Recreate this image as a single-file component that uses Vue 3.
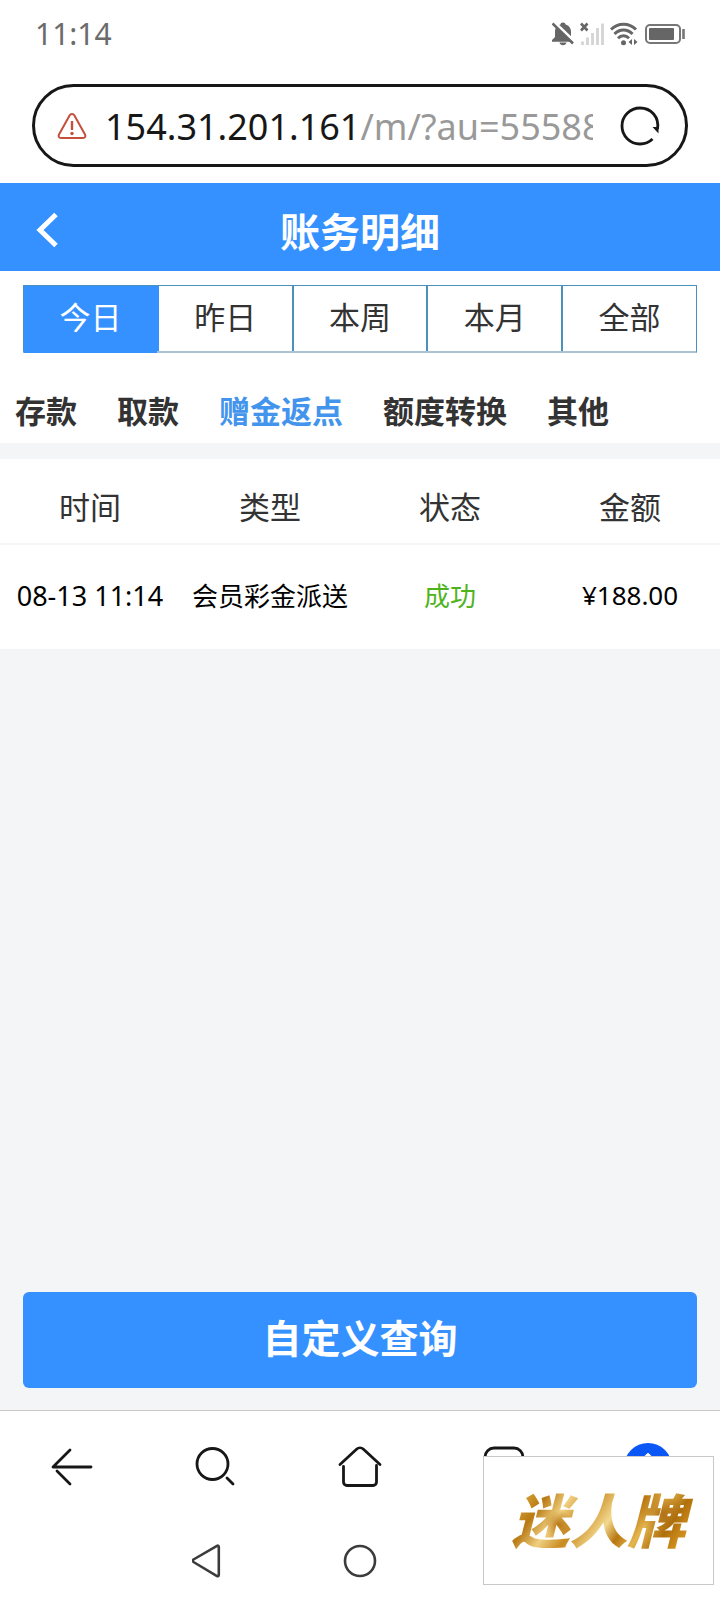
<template>
  <div class="screen">
    <div class="browser">
      <div class="status">
        <span class="clock">11:14</span>
        <div class="status-icons">
          <svg width="22" height="24" viewBox="0 0 22 24">
            <path d="M11 0.500c-1.600 0-2.400.8-2.600 2C5 3.500 3 6.500 3 9.500V15l-3 3v1.800h21V18l-2-3V9.500c0-3-2-6-5.400-7C13.400 1.300 12.600.5 11 .5z" fill="#666" />
            <path d="M7.500 20.500h7c-.6 3.500-6.400 3.500-7 0z" fill="#666" />
            <path d="M2 0l21 20" stroke="#fff" stroke-width="3" />
            <path d="M.5 1.500L21 21.500" stroke="#666" stroke-width="2.600" />
          </svg>
          <svg width="24" height="24" viewBox="0 0 24 24">
            <path d="M1 1.500l6.500 7M7.500 1.500L1 8.500" stroke="#666" stroke-width="2.600" />
            <path d="M2.500 19.500V23M7.500 15.500V23M12.500 11V23M17.500 6V23M22.500 1.500V23" stroke="#d4d4d4" stroke-width="2.800" />
          </svg>
          <svg width="28" height="24" viewBox="0 0 28 24">
            <g fill="none" stroke="#666" stroke-width="3">
              <path d="M1 7.500C8 .5 19 .5 26 7.500" />
              <path d="M4.500 12c5-5.300 13-5.300 18 0" />
              <path d="M8 16.200c3.200-3.400 7.800-3.400 11 0" />
            </g>
            <circle cx="13.500" cy="20.800" r="2.500" fill="#666" />
            <path d="M22 17v6l-3.500-3zM24 17v6l3.500-3z" fill="#666" />
          </svg>
          <svg width="42" height="24" viewBox="0 0 42 24">
            <rect x="2" y="3" width="34" height="18" rx="4" fill="none" stroke="#777" stroke-width="2" />
            <rect x="5" y="6" width="25" height="12" rx="1" fill="#666" />
            <path d="M39.500 7v10" stroke="#777" stroke-width="2.600" />
          </svg>
        </div>
      </div>

      <div class="address">
        <svg width="30" height="28" viewBox="0 0 30 28">
          <path d="M12.700 3.200L2 22.500C1 24.500 2 26 4 26h22c2 0 3-1.500 2-3.500L17.300 3.200c-1-1.700-3.600-1.700-4.600 0z" fill="none" stroke="#c4503c" stroke-width="2" />
          <path d="M15 9v9" stroke="#c4503c" stroke-width="2.400" />
          <circle cx="15" cy="21.500" r="1.700" fill="#c4503c" />
        </svg>
        <button class="url" type="button">154.31.201.161<span class="path">/m/?au=55588</span></button>
        <button class="reload" type="button" aria-label="刷新">
          <svg width="42" height="42" viewBox="0 0 42 42">
            <path d="M38.500 24C40.500 12 32 3 21 3C11 3 3 11 3 21s8 18 18 18c5 0 9-1.500 12.500-5" fill="none" stroke="#171717" stroke-width="2.800" />
            <path d="M33.500 22h6v6.500z" fill="#171717" />
          </svg>
        </button>
      </div>
    </div>

    <header class="header">
      <button class="back" type="button" aria-label="返回">
        <svg width="24" height="36" viewBox="0 0 24 36">
          <path d="M21 2.500L5 18L21 33.500" fill="none" stroke="#fff" stroke-width="5" />
        </svg>
      </button>
      <h1>账务明细</h1>
    </header>

    <div class="filters">
      <div class="ranges">
        <button v-for="item in ranges" :key="item" type="button" :class="{ active: item === range }"
          @click="range = item">{{ item }}</button>
      </div>
      <nav class="categories">
        <button v-for="item in categories" :key="item" type="button" :class="{ active: item === category }"
          @click="category = item">{{ item }}</button>
      </nav>
    </div>

    <table class="records">
      <thead>
        <tr>
          <th v-for="name in columns" :key="name" scope="col">{{ name }}</th>
        </tr>
      </thead>
      <tbody>
        <tr v-for="record in records" :key="record.time">
          <td class="time">{{ record.time }}</td>
          <td>{{ record.type }}</td>
          <td class="success">{{ record.status }}</td>
          <td>{{ record.amount }}</td>
        </tr>
      </tbody>
    </table>

    <div class="query">
      <button type="button">自定义查询</button>
    </div>

    <footer class="bottom">
      <div class="toolbar">
        <button type="button" aria-label="后退">
          <svg width="48" height="48" viewBox="0 0 48 48">
            <path d="M22 7L5 24H43M9 28L22 41" fill="none" stroke="#171717" stroke-width="2.800" stroke-linecap="round" stroke-linejoin="round" />
          </svg>
        </button>
        <button type="button" aria-label="搜索">
          <svg width="48" height="48" viewBox="0 0 48 48">
            <circle cx="20.500" cy="21" r="15.500" fill="none" stroke="#171717" stroke-width="2.800" />
            <path d="M35 35l6 6" stroke="#171717" stroke-width="2.800" stroke-linecap="round" />
          </svg>
        </button>
        <button type="button" aria-label="主页">
          <svg width="48" height="48" viewBox="0 0 48 48">
            <path d="M4 21.500L20.500 6.300c2-1.900 5-1.900 7 0L44 21.500M7.500 23.500V39c0 2 1.500 3.500 3.500 3.500h26c2 0 3.500-1.500 3.500-3.500V22.500" fill="none" stroke="#171717" stroke-width="2.800" stroke-linecap="round" />
          </svg>
        </button>
        <button type="button" aria-label="标签页">
          <svg width="48" height="48" viewBox="0 0 48 48">
            <rect x="5" y="5" width="38" height="38" rx="9" fill="none" stroke="#171717" stroke-width="2.800" />
          </svg>
        </button>
        <button type="button" aria-label="菜单">
          <svg width="48" height="48" viewBox="0 0 48 48">
            <circle cx="24" cy="24" r="24" fill="#0b57f5" />
            <path d="M24 11l9 9H15z" fill="#fff" stroke="#fff" stroke-width="2" stroke-linejoin="round" />
          </svg>
        </button>
      </div>
      <div class="system">
        <span></span>
        <button type="button" aria-label="系统返回">
          <svg width="48" height="40" viewBox="0 0 48 40">
            <path d="M25 4.800L1.500 18.500c-1 .7-1 1.800 0 2.500L25 35c1 .5 1.800 0 1.800-1V6c0-1-.8-1.700-1.800-1.200z" fill="none" stroke="#3c3c3c" stroke-width="2.600" />
          </svg>
        </button>
        <button type="button" aria-label="系统主屏">
          <svg width="48" height="40" viewBox="0 0 48 40">
            <circle cx="24" cy="20" r="15" fill="none" stroke="#3c3c3c" stroke-width="2.600" />
          </svg>
        </button>
        <span></span>
        <span></span>
      </div>
    </footer>

    <div class="brand"><span>迷人牌</span></div>
  </div>
</template>

<script setup>
import { ref } from "vue";

const ranges = ["今日", "昨日", "本周", "本月", "全部"];
const categories = ["存款", "取款", "赠金返点", "额度转换", "其他"];
const columns = ["时间", "类型", "状态", "金额"];

const range = ref("今日");
const category = ref("赠金返点");

const records = ref([
  { time: "08-13 11:14", type: "会员彩金派送", status: "成功", amount: "¥188.00" },
]);
</script>

<style>
body {
  margin: 0;
  background: #fff;
}
</style>

<style scoped>
* {
  box-sizing: border-box;
}

.screen {
  position: relative;
  display: flex;
  flex-direction: column;
  min-height: 100vh;
  background: #f4f5f7;
  color: #333;
  font-family: "Noto Sans", "Noto Sans CJK SC", sans-serif;
}

button {
  padding: 0;
  border: 0;
  background: none;
  color: inherit;
  font: inherit;
  cursor: pointer;
}

svg {
  display: block;
}

.browser {
  padding-bottom: 16px;
  background: #fff;
}

.status {
  display: flex;
  justify-content: space-between;
  align-items: center;
  height: 68px;
  padding: 0 34px 0 35px;
}

.clock {
  color: #6b6b6b;
  font-size: 30px;
  line-height: 36px;
}

.status-icons {
  display: flex;
  gap: 6px;
}

.address {
  display: flex;
  align-items: center;
  height: 83px;
  margin: 16px 32px 0;
  padding: 0 24px 0 22px;
  border: 3px solid #171717;
  border-radius: 42px;
}

.url {
  flex: 1;
  min-width: 0;
  margin-left: 18px;
  padding-top: 2px;
  overflow: hidden;
  color: #171717;
  font-size: 36px;
  line-height: 48px;
  text-align: left;
  white-space: nowrap;
}

.path {
  color: #999;
}

.reload {
  margin-left: 26px;
}

.header {
  display: grid;
  grid-template-columns: 96px 1fr 96px;
  align-items: center;
  height: 88px;
  background: #3591ff;
  color: #fff;
}

.back {
  padding: 6px 0 0 35px;
}

h1 {
  margin: 0;
  padding-top: 10px;
  font-size: 40px;
  line-height: 48px;
  text-align: center;
}

.filters {
  padding-top: 14px;
  background: #fff;
}

.ranges {
  display: flex;
  height: 68px;
  margin: 0 23px;
  border: 1px solid #4a92bd;
  border-bottom: 2px solid #a9c3d3;
}

.ranges button {
  flex: 1;
  padding-bottom: 6px;
  font-size: 31px;
}

.ranges button + button {
  border-left: 2px solid #4a92bd;
}

.ranges button.active {
  margin-bottom: -2px;
  padding-bottom: 8px;
  background: #3591ff;
  color: #fff;
}

.ranges button.active + button {
  border-left-color: #3591ff;
}

.categories {
  display: flex;
  gap: 40px;
  padding: 34px 15px 8px;
  font-size: 31px;
  font-weight: bold;
  line-height: 48px;
}

.categories .active {
  color: #4394ec;
}

.records {
  width: 100%;
  margin-top: 16px;
  border-collapse: separate;
  border-spacing: 0;
  table-layout: fixed;
  background: #fff;
  text-align: center;
}

.records th {
  height: 86px;
  padding: 8px 0 0;
  border-bottom: 2px solid #f4f5f7;
  font-size: 31px;
  font-weight: normal;
}

.records td {
  height: 104px;
  padding: 0 0 4px;
  color: #000;
  font-size: 26px;
  white-space: nowrap;
}

.records .time {
  font-size: 27px;
}

.records .success {
  color: #4fb31c;
}

.query {
  display: flex;
  margin-top: auto;
  padding: 22px 23px;
}

.query button {
  flex: 1;
  height: 96px;
  padding-bottom: 8px;
  border-radius: 6px;
  background: #3591ff;
  color: #fff;
  font-size: 39px;
  font-weight: bold;
}

.bottom {
  border-top: 1px solid #c8c8c8;
  background: #fff;
}

.toolbar,
.system {
  display: grid;
  grid-template-columns: repeat(5, 1fr);
  align-items: center;
  justify-items: center;
}

.toolbar {
  height: 111px;
}

.system {
  height: 78px;
}

.brand {
  position: absolute;
  right: 6px;
  bottom: 15px;
  display: flex;
  align-items: center;
  justify-content: center;
  width: 231px;
  height: 129px;
  border: 1px solid #c8c8c8;
  background: #fff;
}

.brand span {
  padding: 0 12px;
  background:
    radial-gradient(circle at 30% 55%, #b06a08cc 0, transparent 14px),
    radial-gradient(circle at 82% 40%, #a9690dcc 0, transparent 22px),
    linear-gradient(125deg, #a8700f 0%, #d9a436 12%, #b97a14 22%, #f0d080 32%, #c98a20 42%, #f3d98f 54%, #b9760f 62%, #e5b650 70%, #b0700c 80%, #d8961f 90%, #8f5a0c 100%);
  background-clip: text;
  color: transparent;
  font-size: 58px;
  font-style: italic;
  font-weight: 900;
  line-height: 72px;
}
</style>
